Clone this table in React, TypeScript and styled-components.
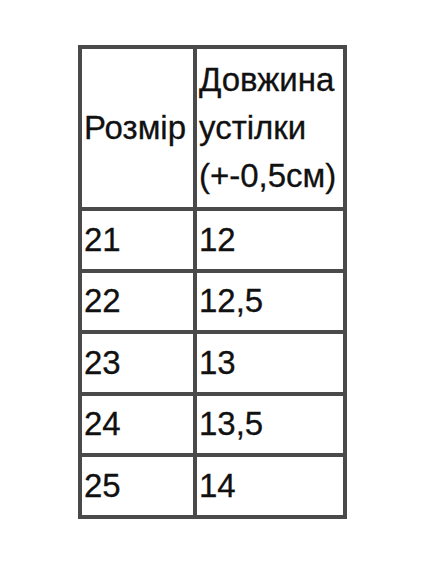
import React from 'react';
import styled, { createGlobalStyle } from 'styled-components';

const GlobalStyle = createGlobalStyle`
  html, body {
    margin: 0;
    padding: 0;
    background: #ffffff;
  }
`;

const Page = styled.div`
  width: 428px;
  height: 570px;
  box-sizing: border-box;
  padding: 45px 0 0 78px;
  background: #ffffff;
  font-family: "Liberation Sans", Arial, sans-serif;
`;

const SizeTable = styled.table`
  border-collapse: collapse;
  width: 269px;
  table-layout: fixed;
  color: #111111;
  font-size: 33px;
  border: 4px solid #4a4a4a;
`;

const Cell = styled.td<{ $header?: boolean }>`
  border: 4px solid #4a4a4a;
  padding: 0 0 0 2px;
  text-align: left;
  vertical-align: middle;
  line-height: ${({ $header }) => ($header ? '48px' : '36px')};
  height: ${({ $header }) => ($header ? '162px' : '61.5px')};
  box-sizing: border-box;
  white-space: nowrap;
  overflow: hidden;
  -webkit-text-stroke: 0.3px #111111;
`;

const rows: [string, string][] = [
  ['21', '12'],
  ['22', '12,5'],
  ['23', '13'],
  ['24', '13,5'],
  ['25', '14'],
];

export default function App() {
  return (
    <Page>
      <GlobalStyle />
      <SizeTable>
        <colgroup>
          <col style={{ width: 115 }} />
          <col />
        </colgroup>
        <tbody>
          <tr>
            <Cell $header>Розмір</Cell>
            <Cell $header>
              Довжина
              <br />
              устілки
              <br />
              (+-0,5см)
            </Cell>
          </tr>
          {rows.map(([size, length]) => (
            <tr key={size}>
              <Cell>{size}</Cell>
              <Cell>{length}</Cell>
            </tr>
          ))}
        </tbody>
      </SizeTable>
    </Page>
  );
}
